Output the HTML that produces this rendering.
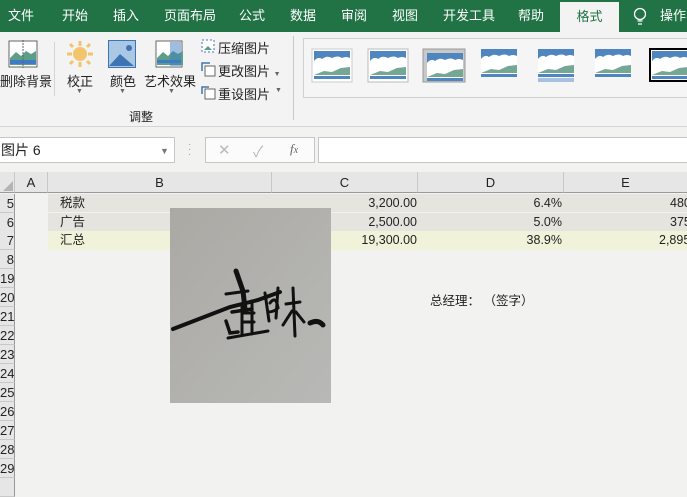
<!DOCTYPE html>
<html><head><meta charset="utf-8"><style>
*{margin:0;padding:0;box-sizing:border-box}
body{width:687px;height:484px;overflow:hidden;background:#f2f3f1;font-family:"Liberation Sans","Noto Sans CJK SC",sans-serif;position:relative;font-size:12px;color:#222}
.a{position:absolute}
.tab{position:absolute;top:0;height:32px;line-height:32px;color:#fff;font-size:13px}
.rh{position:absolute;left:0;width:15px;height:19px;border-bottom:1px solid #c8c8c8;border-right:1px solid #999;background:#e6e6e6;font-size:13px;line-height:19px;text-align:right;overflow:hidden;color:#222}
.ch{position:absolute;top:172px;height:21px;border-right:1px solid #c8c8c8;border-bottom:1px solid #999;background:#e6e6e6;text-align:center;line-height:21px;font-size:13px}
.num{position:absolute;text-align:right;font-size:12.5px;line-height:19px}
.ico{position:absolute}
</style></head><body>
<div class="a" style="left:0;top:0;width:687px;height:32px;background:#217346"></div>
<div class="tab" style="left:8px">文件</div>
<div class="tab" style="left:62px">开始</div>
<div class="tab" style="left:113px">插入</div>
<div class="tab" style="left:164px">页面布局</div>
<div class="tab" style="left:239px">公式</div>
<div class="tab" style="left:290px">数据</div>
<div class="tab" style="left:341px">审阅</div>
<div class="tab" style="left:392px">视图</div>
<div class="tab" style="left:443px">开发工具</div>
<div class="tab" style="left:518px">帮助</div>
<div class="a" style="left:560px;top:2px;width:59px;height:30px;background:#f3f3f3;color:#217346;text-align:center;line-height:30px;font-size:13px">格式</div>
<svg class="a" style="left:633px;top:7px" width="14" height="20"><circle cx="7" cy="7" r="5.5" fill="none" stroke="#fff" stroke-width="1.3"/><path d="M4.5 14h5M5 17h4" stroke="#fff" stroke-width="1.3"/></svg>
<div class="tab" style="left:660px">操作说</div>
<div class="a" style="left:0;top:32px;width:687px;height:95px;background:#f3f3f3;border-bottom:1px solid #d4d4d4"></div>
<!-- remove bg icon -->
<svg class="ico" style="left:8px;top:40px" width="30" height="28"><rect x="1" y="1" width="28" height="26" fill="#fff" stroke="#666"/><path d="M2 18l6-6 5 4 5-5 5 3 5-3v14H2z" fill="#5c9e87"/><rect x="2" y="20" width="26" height="4" fill="#3d7bc4"/><path d="M15 0v28" stroke="#666" stroke-dasharray="2 1"/></svg>
<div class="a" style="left:0;top:71px;font-size:13px">删除背景</div>
<div class="a" style="left:54px;top:42px;width:1px;height:54px;background:#d4d4d4"></div>
<svg class="ico" style="left:66px;top:40px" width="28" height="28"><circle cx="14" cy="14" r="7" fill="#f2c46b"/><g stroke="#f2c46b" stroke-width="3"><path d="M14 1v5M14 22v5M1 14h5M22 14h5M4 4l3 3M21 21l3 3M24 4l-3 3M4 24l3-3"/></g></svg>
<div class="a" style="left:67px;top:71px;font-size:13px">校正</div>
<div class="a" style="left:76px;top:88px;font-size:7px;color:#666">▼</div>
<svg class="ico" style="left:108px;top:40px" width="28" height="28"><rect x="0.5" y="0.5" width="27" height="27" fill="#aac8e4" stroke="#3f74b4"/><path d="M1 26l11-12 14 12z" fill="#3f74b4"/><circle cx="21" cy="8" r="3" fill="#3f74b4"/></svg>
<div class="a" style="left:110px;top:71px;font-size:13px">颜色</div>
<div class="a" style="left:119px;top:88px;font-size:7px;color:#666">▼</div>
<svg class="ico" style="left:155px;top:40px" width="28" height="28"><rect x="1" y="1" width="26" height="26" fill="#fff" stroke="#666"/><path d="M2 18l6-6 5 4 5-5 5 3 5-3v14H2z" fill="#5c9e87"/><rect x="2" y="20" width="24" height="3" fill="#3d7bc4"/><rect x="15" y="2" width="11" height="24" fill="#3d7bc4" opacity=".5"/></svg>
<div class="a" style="left:144px;top:71px;font-size:13px">艺术效果</div>
<div class="a" style="left:168px;top:88px;font-size:7px;color:#666">▼</div>
<svg class="ico" style="left:200px;top:38px" width="16" height="16"><rect x="2" y="2" width="12" height="12" fill="#fff" stroke="#3f74b4" stroke-dasharray="2 2"/><path d="M4 12l4-4 4 4z" fill="#5c9e87"/></svg>
<div class="a" style="left:218px;top:38px;font-size:13px">压缩图片</div>
<svg class="ico" style="left:200px;top:61px" width="16" height="16"><rect x="5" y="5" width="10" height="10" fill="#fff" stroke="#666"/><path d="M2 10V2h8" fill="none" stroke="#3f74b4" stroke-width="1.5"/></svg>
<div class="a" style="left:218px;top:61px;font-size:13px">更改图片 <span style="font-size:7px;color:#666">▼</span></div>
<svg class="ico" style="left:200px;top:84px" width="16" height="16"><rect x="5" y="5" width="10" height="10" fill="#fff" stroke="#666"/><path d="M2 10V3h7" fill="none" stroke="#3f74b4" stroke-width="1.5"/></svg>
<div class="a" style="left:218px;top:84px;font-size:13px">重设图片</div>
<div class="a" style="left:275px;top:87px;font-size:7px;color:#666">▼</div>
<div class="a" style="left:129px;top:108px;font-size:12px">调整</div>
<div class="a" style="left:293px;top:36px;width:1px;height:84px;background:#c8c8c8"></div>
<div class="a" style="left:303px;top:38px;width:384px;height:60px;border:1px solid #d0d0d0;border-right:none;background:#f5f5f5"></div>
<svg class="a" style="left:310px;top:48px" width="377" height="36">
<defs><g id="p"><rect width="36" height="28" fill="#fff"/><rect width="36" height="12" fill="#4f86c0"/><path d="M0 10q4-5 8-2 5-4 10-1 6-3 10 0 4-2 8 0v6H0z" fill="#fff"/><path d="M0 24l10-4 8 1 9-4 9-1v8H0z" fill="#74a894"/><rect y="25" width="36" height="3" fill="#4f86c0"/></g></defs>
<rect x="2" y="1" width="40" height="33" fill="#fff" stroke="#ccc"/><use href="#p" x="4" y="3"/>
<rect x="58" y="1" width="40" height="33" fill="#fff" stroke="#bbb"/><use href="#p" x="60" y="3"/>
<rect x="113" y="1" width="42" height="33" fill="#c8c8c8" stroke="#999"/><use href="#p" x="117" y="5" transform="scale(1)"/>
<use href="#p" x="171" y="1"/><use href="#p" x="228" y="1"/><rect x="228" y="30" width="36" height="4" fill="#a7c1e0"/>
<use href="#p" x="285" y="1"/>
<rect x="339" y="0" width="40" height="34" fill="#000"/><rect x="341" y="2" width="36" height="30" fill="#fff"/><use href="#p" x="342" y="3"/>
</svg>
<!-- formula bar -->
<div class="a" style="left:0;top:137px;width:175px;height:26px;background:#fff;border:1px solid #c6c6c6;border-left:none;font-size:14px;line-height:25px;padding-left:1px">图片 6</div>
<div class="a" style="left:160px;top:146px;font-size:9px;color:#777">▼</div>
<div class="a" style="left:188px;top:142px;color:#999;font-size:10px;line-height:5px">·<br>·<br>·</div>
<div class="a" style="left:205px;top:137px;width:110px;height:26px;background:#fbfbfb;border:1px solid #c6c6c6"></div>
<div class="a" style="left:218px;top:141px;color:#bbb;font-size:15px">✕</div>
<div class="a" style="left:253px;top:141px;color:#bbb;font-size:15px">✓</div>
<div class="a" style="left:290px;top:141px;color:#666;font-size:13px;font-style:italic;font-family:'Liberation Serif',serif">f<span style="font-size:10px">x</span></div>
<div class="a" style="left:318px;top:137px;width:369px;height:26px;background:#fff;border:1px solid #c6c6c6;border-right:none"></div>
<!-- column headers -->
<div class="a" style="left:0;top:172px;width:15px;height:21px;background:#e6e6e6;border-bottom:1px solid #999;border-right:1px solid #c8c8c8"></div>
<svg class="a" style="left:2px;top:180px" width="12" height="12"><path d="M11 1V11H1z" fill="#b4b4b4"/></svg>
<div class="ch" style="left:15px;width:33px">A</div>
<div class="ch" style="left:48px;width:224px">B</div>
<div class="ch" style="left:272px;width:146px">C</div>
<div class="ch" style="left:418px;width:146px">D</div>
<div class="ch" style="left:564px;width:123px;border-right:none">E</div>
<!-- row data bg -->
<div class="a" style="left:48px;top:194px;width:639px;height:18px;background:#e6e4de"></div>
<div class="a" style="left:48px;top:213px;width:639px;height:18px;background:#e6e4de"></div>
<div class="a" style="left:48px;top:231px;width:639px;height:19px;background:#f0f3da"></div>
<div class="rh" style="top:194px">5</div>
<div class="rh" style="top:213px">6</div>
<div class="rh" style="top:231px">7</div>
<div class="rh" style="top:250px">8</div>
<div class="rh" style="top:269px">19</div>
<div class="rh" style="top:288px">20</div>
<div class="rh" style="top:307px">21</div>
<div class="rh" style="top:326px">22</div>
<div class="rh" style="top:345px">23</div>
<div class="rh" style="top:364px">24</div>
<div class="rh" style="top:383px">25</div>
<div class="rh" style="top:402px">26</div>
<div class="rh" style="top:421px">27</div>
<div class="rh" style="top:440px">28</div>
<div class="rh" style="top:459px">29</div>
<div class="rh" style="top:478px"></div>
<div class="a" style="left:60px;top:194px;font-size:12.5px;line-height:19px">税款</div>
<div class="a" style="left:60px;top:213px;font-size:12.5px;line-height:19px">广告</div>
<div class="a" style="left:60px;top:231px;font-size:12.5px;line-height:19px">汇总</div>
<div class="num" style="left:300px;width:117px;top:194px">3,200.00</div>
<div class="num" style="left:300px;width:117px;top:213px">2,500.00</div>
<div class="num" style="left:300px;width:117px;top:231px">19,300.00</div>
<div class="num" style="left:450px;width:112px;top:194px">6.4%</div>
<div class="num" style="left:450px;width:112px;top:213px">5.0%</div>
<div class="num" style="left:450px;width:112px;top:231px">38.9%</div>
<div class="a" style="left:670px;top:194px;font-size:12.5px;line-height:19px">480</div>
<div class="a" style="left:670px;top:213px;font-size:12.5px;line-height:19px">375</div>
<div class="a" style="left:659px;top:231px;font-size:12.5px;line-height:19px">2,895</div>
<div class="a" style="left:430px;top:290px;font-size:12.5px">总经理：&nbsp;（签字）</div>
<!-- picture -->
<svg class="a" style="left:170px;top:208px" width="161" height="195">
<defs><linearGradient id="g" x1="0" y1="0" x2="1" y2="1"><stop offset="0" stop-color="#aba9a4"/><stop offset="1" stop-color="#b8b9b6"/></linearGradient></defs>
<rect width="161" height="195" fill="url(#g)"/>
<g fill="none" stroke="#111" stroke-linecap="round">
<path d="M3 121L60 99 88 92 110 84" stroke-width="4"/>
<path d="M66 63l7 20 2 18" stroke-width="5"/>
<path d="M56 86l22-3" stroke-width="3"/>
<path d="M62 104l20-3M56 113l4 12 8-1" stroke-width="3.5"/>
<path d="M58 130l40-7M72 96l0 30M82 93l0 33M72 105h12M72 114h12" stroke-width="3"/>
<path d="M95 85l4 28M100 95q6-8 8 5-4 4-10 4M108 80l-2 30" stroke-width="3"/>
<path d="M116 96l14-2M123 80l2 48M122 103l-9 14M126 104l8 10" stroke-width="3"/>
<path d="M140 115q8-4 13 2" stroke-width="5"/>
</g>
</svg>
</body></html>
